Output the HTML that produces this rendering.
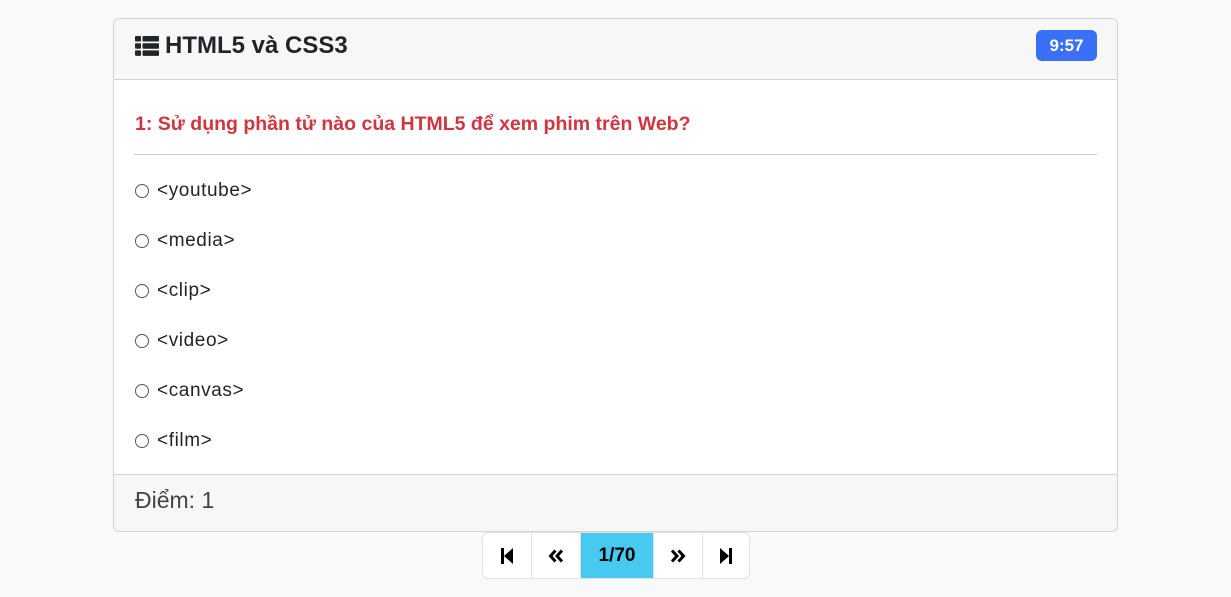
<!DOCTYPE html>
<html><head><meta charset="utf-8"><style>
*{box-sizing:border-box;margin:0;padding:0}
body{width:1231px;height:597px;background:#f8f9fa;font-family:"Liberation Sans",sans-serif;color:#212529;position:relative;overflow:hidden}
.card{position:absolute;left:113px;top:18px;width:1005px;height:514px;background:#fff;border:1px solid #d3d3d3;border-radius:6px;overflow:hidden}
.hd{height:61px;background:#f7f7f7;border-bottom:1px solid #d3d3d3;position:relative}
.hd h1{position:absolute;left:21px;top:13px;font-size:24px;font-weight:bold;display:flex;align-items:center;gap:6px}
.badge{position:absolute;right:20px;top:11px;width:61px;height:31px;background:#3a6ff7;color:#fff;border-radius:6px;font-weight:bold;font-size:17px;text-align:center;line-height:31px}
.q{position:absolute;left:21px;top:94px;font-size:19.5px;font-weight:bold;color:#d1353f}
.hr{position:absolute;left:20px;right:20px;top:135px;border-top:1px solid #ccc}
.opt{position:absolute;left:21px;font-size:19px;letter-spacing:0.6px;display:flex;align-items:center;gap:8px}
.opt i{width:14px;height:14px;border:1px solid #555;border-radius:50%;display:inline-block}
.ft{position:absolute;left:0;right:0;bottom:0;height:57px;background:#f7f7f7;border-top:1px solid #d3d3d3;font-size:23px;color:#444;padding:12px 0 0 21px}
.pg{position:absolute;left:482px;top:532px;height:47px;display:flex;border:1px solid #dee2e6;border-radius:6px;overflow:hidden;background:#fff}
.pg div{height:45px;display:flex;align-items:center;justify-content:center;border-left:1px solid #dee2e6;font-weight:bold;font-size:19px;color:#000}
.pg div:first-child{border-left:0}
</style></head><body>
<div class="card">
 <div class="hd"><h1><svg width="24" height="20" viewBox="0 0 24 20"><g fill="#212529"><rect x="0" y="0" width="6" height="5.5" rx="1"/><rect x="7.5" y="0" width="16.5" height="5.5" rx="1"/><rect x="0" y="7.2" width="6" height="5.5" rx="1"/><rect x="7.5" y="7.2" width="16.5" height="5.5" rx="1"/><rect x="0" y="14.4" width="6" height="5.5" rx="1"/><rect x="7.5" y="14.4" width="16.5" height="5.5" rx="1"/></g></svg>HTML5 và CSS3</h1><div class="badge">9:57</div></div>
 <div class="q">1: Sử dụng phần tử nào của HTML5 để xem phim trên Web?</div>
 <div class="hr"></div>
 <div class="opt" style="top:161px"><i></i>&lt;youtube&gt;</div>
 <div class="opt" style="top:211px"><i></i>&lt;media&gt;</div>
 <div class="opt" style="top:261px"><i></i>&lt;clip&gt;</div>
 <div class="opt" style="top:311px"><i></i>&lt;video&gt;</div>
 <div class="opt" style="top:361px"><i></i>&lt;canvas&gt;</div>
 <div class="opt" style="top:411px"><i></i>&lt;film&gt;</div>
 <div class="ft">Điểm: 1</div>
</div>
<div class="pg">
 <div style="width:48px"><svg width="14" height="16" viewBox="0 0 14 16"><rect x="1" y="0" width="3" height="16"/><path d="M13 0V16L4 8Z"/></svg></div>
 <div style="width:49px"><svg width="16" height="14" viewBox="0 0 16 14" fill="none" stroke="#000" stroke-width="3" stroke-linejoin="miter"><path d="M7.5 1.5L2.5 7L7.5 12.5M14 1.5L9 7L14 12.5"/></svg></div>
 <div style="width:73px;background:#48caf0">1/70</div>
 <div style="width:49px"><svg width="16" height="14" viewBox="0 0 16 14" fill="none" stroke="#000" stroke-width="3"><path d="M2 1.5L7 7L2 12.5M8.5 1.5L13.5 7L8.5 12.5"/></svg></div>
 <div style="width:47px"><svg width="14" height="16" viewBox="0 0 14 16"><rect x="10" y="0" width="3" height="16"/><path d="M1 0V16L10 8Z"/></svg></div>
</div>
</body></html>
